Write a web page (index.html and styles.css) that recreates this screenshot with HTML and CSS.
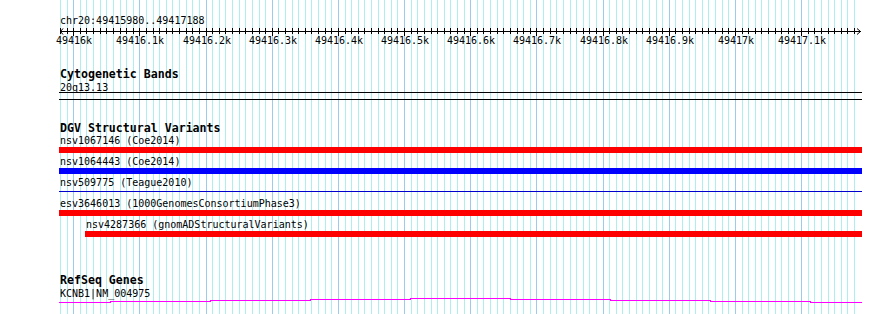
FILE: index.html
```html
<!DOCTYPE html>
<html lang="en">
<head>
    <meta charset="UTF-8">
    <title>chr20:49415980..49417188</title>
    <link rel="stylesheet" href="styles.css">
</head>
<body>
    <div class="browser">
        <svg class="grid" id="grid" width="803" height="314"></svg>

        <div class="content">
            <div class="locus">chr20:49415980..49417188</div>
            <svg class="ruler" id="ruler" width="803" height="22"></svg>

            <section class="track cyto">
                <h3 class="track-title">Cytogenetic Bands</h3>
                <div class="feature-name">20q13.13</div>
                <div class="band"></div>
            </section>

            <section class="track dgv">
                <h3 class="track-title">DGV Structural Variants</h3>
                <div class="feature">
                    <div class="feature-name">nsv1067146 (Coe2014)</div>
                    <div class="bar red"></div>
                </div>
                <div class="feature">
                    <div class="feature-name">nsv1064443 (Coe2014)</div>
                    <div class="bar blue"></div>
                </div>
                <div class="feature">
                    <div class="feature-name">nsv509775 (Teague2010)</div>
                    <div class="bar thin"></div>
                </div>
                <div class="feature">
                    <div class="feature-name">esv3646013 (1000GenomesConsortiumPhase3)</div>
                    <div class="bar red"></div>
                </div>
                <div class="feature indent">
                    <div class="feature-name">nsv4287366 (gnomADStructuralVariants)</div>
                    <div class="bar red"></div>
                </div>
            </section>

            <section class="track refseq">
                <h3 class="track-title">RefSeq Genes</h3>
                <div class="feature-name">KCNB1|NM_004975</div>
                <svg class="gene" width="803" height="7">
                    <path d="M0 5.5 H51 V4.5 H151 V3.5 H251 V2.5 H351 V1.5 H451 V2.5 H551 V3.5 H651 V4.5 H751 V5.5 H803"></path>
                </svg>
            </section>
        </div>
    </div>

    <script>
        var inicio = 49415980;
        var fim = 49417188;
        var escala = 0.6617;
        var svgNS = "http://www.w3.org/2000/svg";

        function posicao(bp) {
            return Math.round(1 + (bp - inicio) * escala) + 0.5;
        }

        function criar(tag, attrs, pai) {
            var el = document.createElementNS(svgNS, tag);
            for (var k in attrs) {
                el.setAttribute(k, attrs[k]);
            }
            pai.appendChild(el);
            return el;
        }

        var grid = document.getElementById("grid");
        var ruler = document.getElementById("ruler");

        // grid lines every 10bp, darker every 100bp
        for (var bp = inicio; bp <= fim; bp += 10) {
            var x = posicao(bp);
            var major = bp % 100 === 0;
            criar("line", { x1: x, x2: x, y1: 0, y2: 314, "class": major ? "major" : "minor" }, grid);
            criar("line", { x1: x, x2: x, y1: 2, y2: major ? 10 : 8, "class": "tick" }, ruler);
            if (major) {
                var t = criar("text", { x: x + 0.5, y: 18, "class": "tick-label" }, ruler);
                t.textContent = (bp / 1000) + "k";
            }
        }

        criar("line", { x1: 1, x2: 802, y1: 5.5, y2: 5.5, "class": "tick" }, ruler);
        criar("polyline", { points: "4,2.5 1.5,5.5 4,8.5", "class": "arrow" }, ruler);
        criar("polyline", { points: "798,2.5 801.5,5.5 798,8.5", "class": "arrow" }, ruler);
    </script>
</body>
</html>
```

FILE: styles.css
```css
body {
    margin: 0;
    background: #ffffff;
    color: #000000;
    font-family: "DejaVu Sans Mono", "Liberation Mono", monospace;
}

.browser {
    position: relative;
    margin-left: 59px;
    width: 803px;
    height: 314px;
}

.grid {
    position: absolute;
    top: 0;
    left: 0;
    shape-rendering: crispEdges;
}

.grid .minor {
    stroke: #afeeee;
    stroke-width: 1;
}

.grid .major {
    stroke: #9dcbec;
    stroke-width: 1;
}

.content {
    position: relative;
    padding-top: 15px;
}

.locus,
.feature-name {
    padding-left: 1px;
    font-size: 10px;
    line-height: 12px;
    height: 12px;
    white-space: nowrap;
}

.ruler {
    display: block;
    margin-top: -1px;
    margin-bottom: -3px;
    overflow: visible;
}

.ruler .tick {
    stroke: #000000;
    stroke-width: 1;
    shape-rendering: crispEdges;
}

.ruler .arrow {
    fill: none;
    stroke: #000000;
    stroke-width: 1;
}

.ruler .tick-label {
    font-family: "DejaVu Sans Mono", monospace;
    font-size: 10px;
    text-anchor: middle;
    fill: #000000;
}

.track-title {
    margin: 0;
    padding-left: 1px;
    font-size: 11.6px;
    font-weight: bold;
    line-height: 13px;
    height: 13px;
    white-space: nowrap;
}

.cyto {
    margin-top: 23px;
}

.cyto .feature-name {
    margin-top: 1px;
}

.band {
    height: 6px;
    margin-top: -2px;
    border-top: 1px solid #000000;
    border-bottom: 1px solid #000000;
}

.dgv {
    margin-top: 22px;
}

.feature {
    margin-bottom: 3px;
}

.feature.indent {
    margin-left: 26px;
}

.bar {
    height: 6px;
}

.bar.red {
    background: #ff0000;
}

.bar.blue {
    background: #0000ff;
}

.bar.thin {
    background: linear-gradient(#0000cc, #0000cc) 0 2px / 100% 1px no-repeat;
}

.refseq {
    margin-top: 37px;
}

.refseq .feature-name {
    margin-top: 1px;
}

.gene {
    display: block;
    margin-top: -3px;
}

.gene path {
    fill: none;
    stroke: #ff00ff;
    stroke-width: 1;
    shape-rendering: crispEdges;
}
```
